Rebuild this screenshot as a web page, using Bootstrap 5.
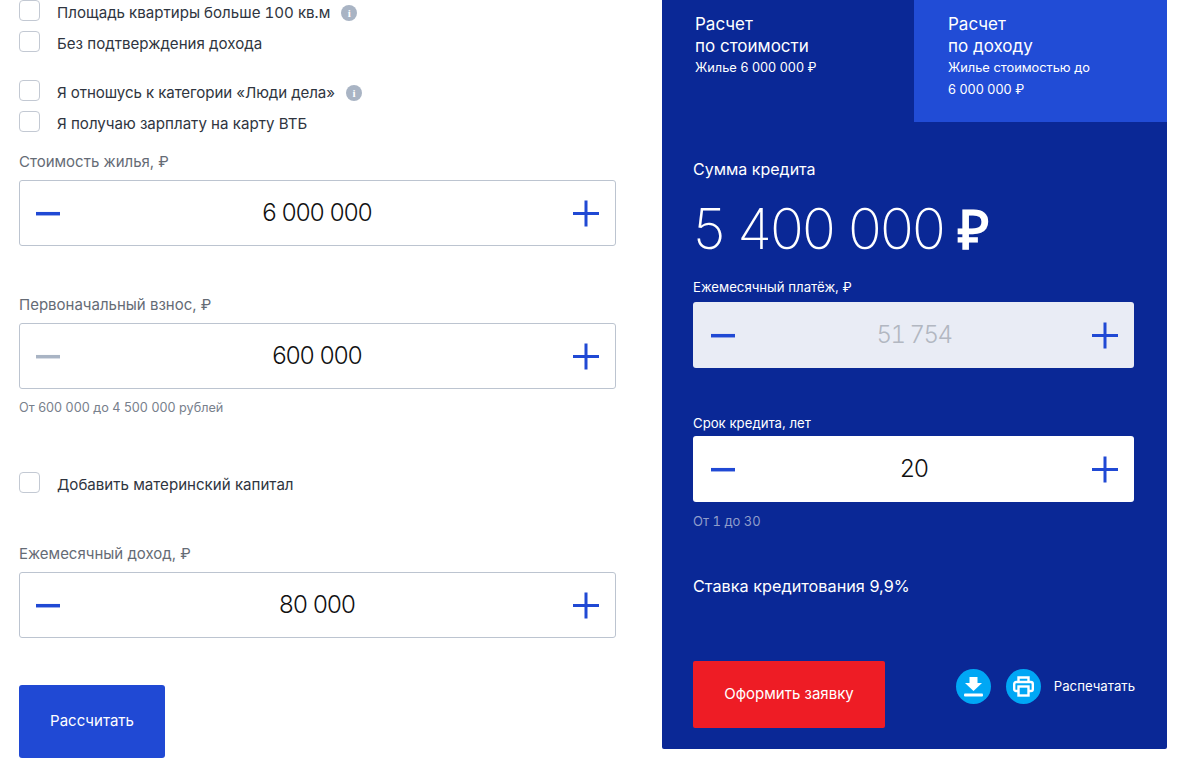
<!DOCTYPE html>
<html lang="ru">
<head>
    <meta charset="UTF-8">
    <meta name="viewport" content="width=device-width, initial-scale=1.0">
    <title>Ипотечный калькулятор</title>
    <link href="https://cdn.jsdelivr.net/npm/bootstrap@5.3.0/dist/css/bootstrap.min.css" rel="stylesheet">
    <style>
        html, body { height: 774px; overflow: hidden; }
        body { font-family: "Inter", "Liberation Sans", sans-serif; font-size: 15px; color: #2f3540; background: #fff; }
        .calc-wrap { width: 1148px; margin-left: 19px; gap: 46px; }
        .calc-left { width: 597px; }
        .calc-right { width: 505px; height: 749px; background: #0a2896; color: #fff; border-radius: 0 0 2px 2px; }

        .tick-row { height: 21px; margin-bottom: 10px; line-height: 21px; font-size: 15.1px; }
        .tick-box { width: 21px; height: 21px; border: 1px solid #c3c9d3; border-radius: 4px; background: #fff; margin-right: 17px; flex: none; }
        .tick-text { padding-top: 3px; }
        .tick-num { font-feature-settings: "tnum"; }
        .tick-tight { letter-spacing: -.09px; }
        .tick-info { width: 16px; height: 16px; border-radius: 50%; background: #a9b4c4; color: #fff; font: bold 11px/16px "Liberation Serif", serif; text-align: center; margin: 5px 0 0 11px; }
        .tick-gap { margin-top: 28px; }

        .field-label { font-size: 15px; line-height: 20px; color: #656b75; margin-bottom: 8px; }
        .stepper { height: 66px; border: 1px solid #bcc4d0; border-radius: 3px; background: #fff; padding: 0 16px 0 15px; color: #111; font-size: 24px; font-weight: 300; letter-spacing: -.8px; }
        .stepper svg { display: block; width: 26px; height: 28px; flex: none; }
        .stepper-val { flex: 1; text-align: center; }
        .field-hint { font-size: 12.7px; line-height: 18px; color: #78808c; margin-top: 10px; }
        .ico-on { stroke: #2049d4; }
        .ico-off { stroke: #a9b4c4; }

        .go-btn { width: 146px; height: 73px; background: #2049d4; border: 0; border-radius: 3px; color: #fff; font-size: 15px; margin-top: 47px; }

        .tab-item { width: 252px; height: 122px; padding: 14px 33px; font-size: 17px; line-height: 21.500px; }
        .tab-active { width: 253px; background: #214cd6; padding: 14px 20px 14px 34px; }
        .tab-sub { font-size: 12.800px; line-height: 22px; margin-top: 0; }

        .res-body { padding: 0 33px 0 31px; }
        .res-title { font-size: 16px; line-height: 22px; margin-top: 36px; }
        .res-sum { font-size: 56px; line-height: 68px; font-weight: 200; margin-top: 15px; letter-spacing: -1.800px; }
        .res-sum b { font-family: "Liberation Sans", sans-serif; font-weight: 700; font-size: 54px; letter-spacing: 0; }
        .res-label { font-size: 13.200px; line-height: 18px; margin-top: 14px; margin-bottom: 6px; }
        .res-body .stepper { border: 0; padding: 0 16px 0 17px; }
        .stepper-off { background: #e9ecf5; color: #b2b7c1 !important; font-feature-settings: "tnum"; letter-spacing: -1.500px !important; }
        .res-hint { font-size: 13px; line-height: 18px; color: #8f9dcb; margin-top: 10px; font-feature-settings: "tnum"; }
        .res-rate { font-size: 16.250px; line-height: 22px; margin-top: 45px; }
        .apply-btn { width: 192px; height: 67px; background: #ee1c25; border: 0; border-radius: 2px; color: #fff; font-size: 15px; }
        .res-foot { margin-top: 64px; }
        .res-tools { margin-right: -1px; }
        .round-ico { width: 35px; height: 35px; border-radius: 50%; background: #00a7f5; }
        .round-next { margin-left: -1px; }
        .print-txt { font-size: 13.200px; margin-left: -3.500px; }

        .mt-first { margin-top: 20px; }
        .mt-second { margin-top: 49px; }
        .mt-capital { margin-top: 55px; }
        .mt-income { margin-top: 51px; }
        .res-label.mt-term { margin-top: 46px; margin-bottom: 4px; }
    </style>
</head>
<body>
    <div class="calc-wrap d-flex align-items-start">
        <!-- Left form -->
        <div class="calc-left">
            <div class="tick-row d-flex align-items-center"><span class="tick-box"></span><span class="tick-text tick-num">Площадь квартиры больше 100 кв.м</span><span class="tick-info">i</span></div>
            <div class="tick-row d-flex align-items-center"><span class="tick-box"></span><span class="tick-text">Без подтверждения дохода</span></div>
            <div class="tick-row tick-gap d-flex align-items-center"><span class="tick-box"></span><span class="tick-text tick-tight">Я отношусь к категории «Люди дела»</span><span class="tick-info">i</span></div>
            <div class="tick-row d-flex align-items-center"><span class="tick-box"></span><span class="tick-text">Я получаю зарплату на карту ВТБ</span></div>

            <div class="field-label mt-first">Стоимость жилья, ₽</div>
            <div class="stepper d-flex align-items-center">
                <svg viewBox="0 0 26 28"><path class="ico-on" d="M1 14.700h24" stroke-width="3.500"/></svg>
                <span class="stepper-val">6 000 000</span>
                <svg viewBox="0 0 26 28"><path class="ico-on" d="M0 14.500h26M13 1.500v26" stroke-width="3"/></svg>
            </div>

            <div class="field-label mt-second">Первоначальный взнос, ₽</div>
            <div class="stepper d-flex align-items-center">
                <svg viewBox="0 0 26 28"><path class="ico-off" d="M1 14.700h24" stroke-width="3.500"/></svg>
                <span class="stepper-val">600 000</span>
                <svg viewBox="0 0 26 28"><path class="ico-on" d="M0 14.500h26M13 1.500v26" stroke-width="3"/></svg>
            </div>
            <div class="field-hint">От 600 000 до 4 500 000 рублей</div>

            <div class="tick-row mt-capital d-flex align-items-center"><span class="tick-box"></span><span class="tick-text">Добавить материнский капитал</span></div>

            <div class="field-label mt-income">Ежемесячный доход, ₽</div>
            <div class="stepper d-flex align-items-center">
                <svg viewBox="0 0 26 28"><path class="ico-on" d="M1 14.700h24" stroke-width="3.500"/></svg>
                <span class="stepper-val">80 000</span>
                <svg viewBox="0 0 26 28"><path class="ico-on" d="M0 14.500h26M13 1.500v26" stroke-width="3"/></svg>
            </div>

            <button type="button" class="btn go-btn">Рассчитать</button>
        </div>

        <!-- Result panel -->
        <div class="calc-right">
            <div class="d-flex">
                <div class="tab-item">Расчет<br>по стоимости<div class="tab-sub">Жилье 6 000 000 ₽</div></div>
                <div class="tab-item tab-active">Расчет<br>по доходу<div class="tab-sub">Жилье стоимостью до<br>6 000 000 ₽</div></div>
            </div>
            <div class="res-body">
                <div class="res-title">Сумма кредита</div>
                <div class="res-sum">5 400 000 <b>₽</b></div>

                <div class="res-label">Ежемесячный платёж, ₽</div>
                <div class="stepper stepper-off d-flex align-items-center">
                    <svg viewBox="0 0 26 28"><path class="ico-on" d="M1 14.700h24" stroke-width="3.500"/></svg>
                    <span class="stepper-val">51 754</span>
                    <svg viewBox="0 0 26 28"><path class="ico-on" d="M0 14.500h26M13 1.500v26" stroke-width="3"/></svg>
                </div>

                <div class="res-label mt-term">Срок кредита, лет</div>
                <div class="stepper d-flex align-items-center">
                    <svg viewBox="0 0 26 28"><path class="ico-on" d="M1 14.700h24" stroke-width="3.500"/></svg>
                    <span class="stepper-val">20</span>
                    <svg viewBox="0 0 26 28"><path class="ico-on" d="M0 14.500h26M13 1.500v26" stroke-width="3"/></svg>
                </div>
                <div class="res-hint">От 1 до 30</div>

                <div class="res-rate">Ставка кредитования 9,9%</div>

                <div class="res-foot d-flex align-items-start">
                    <button type="button" class="btn apply-btn">Оформить заявку</button>
                    <div class="res-tools d-flex align-items-center ms-auto gap-3 mt-2">
                        <span class="round-ico d-flex align-items-center justify-content-center">
                            <svg width="19" height="20" viewBox="0 0 19 20" fill="#fff"><path d="M5.500 0h8v6h4.500L9.500 14 1 6h4.500z"/><rect x="0" y="16.500" width="19" height="3" rx="1"/></svg>
                        </span>
                        <span class="round-ico round-next d-flex align-items-center justify-content-center">
                            <svg width="21" height="21" viewBox="0 0 21 21" fill="none" stroke="#fff" stroke-width="2.400"><path d="M5.500 6V1.500h10V6"/><path d="M5 15H3a1.800 1.800 0 0 1-1.800-1.800V8A2 2 0 0 1 3.200 6h14.600a2 2 0 0 1 2 2v5.200A1.800 1.800 0 0 1 18 15h-2"/><rect x="5.500" y="10.500" width="10" height="9"/></svg>
                        </span>
                        <span class="print-txt">Распечатать</span>
                    </div>
                </div>
            </div>
        </div>
    </div>
    <script src="https://cdn.jsdelivr.net/npm/bootstrap@5.3.0/dist/js/bootstrap.bundle.min.js"></script>
</body>
</html>
